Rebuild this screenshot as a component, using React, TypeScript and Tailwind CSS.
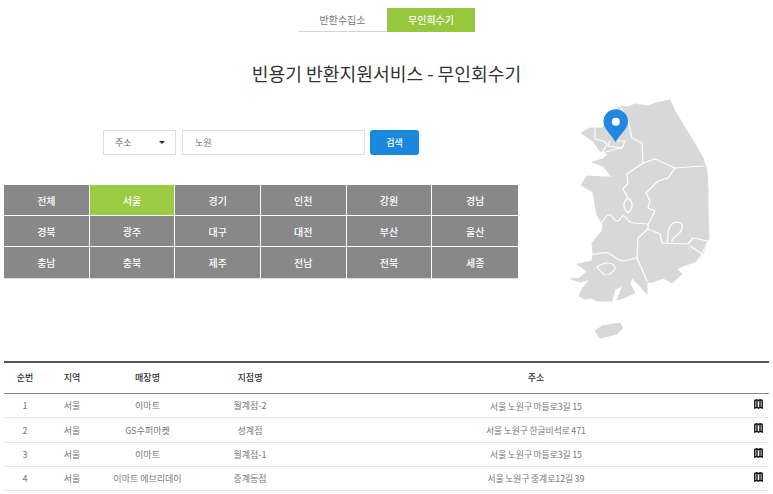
const regions = [
  "전체", "서울", "경기", "인천", "강원", "경남",
  "경북", "광주", "대구", "대전", "부산", "울산",
  "충남", "충북", "제주", "전남", "전북", "세종",
];

const rows = [
  { no: 1, area: "서울", store: "이마트", branch: "월계점-2", addr: "서울 노원구 마들로3길 15" },
  { no: 2, area: "서울", store: "GS수퍼마켓", branch: "성계점", addr: "서울 노원구 한글비석로 471" },
  { no: 3, area: "서울", store: "이마트", branch: "월계점-1", addr: "서울 노원구 마들로3길 15" },
  { no: 4, area: "서울", store: "이마트 에브리데이", branch: "중계동점", addr: "서울 노원구 중계로12길 39" },
];

const cols = "grid grid-cols-[42px_52px_99px_106px_1fr] items-center text-center";

function KoreaMap() {
  return (
    <svg viewBox="565 95 150 250" className="h-[250px] w-[150px]" fill="none">
      <path
        fill="#d8d8d8"
        stroke="#d8d8d8"
        strokeWidth="1"
        strokeLinejoin="round"
        d="M620 105L628 106L635 103L647 105L660 101L670 99L675 110L687 130L695 143L703 157L707 170L708 190L708 210L709 237L703 253L697 260L683 265L677 268L682 273L672 282L663 277L653 281L647 281L647 293L640 285L632 277L630 283L635 292L623 297L617 299L623 285L615 288L612 300L597 300L592 297L585 298L579 295L582 288L590 278L580 281L571 278L580 277L587 270L577 263L583 262L592 260L593 253L592 242L602 230L603 224L597 214L595 203L593 191L581 184L587 175L603 176L612 176L603 165L592 161L603 158L608 153L600 150L593 140L581 132L590 127L603 127L605 122Z"
      />
      <path fill="#d8d8d8" stroke="#d8d8d8" strokeLinejoin="round" d="M595 330L602 325L620 322L623 327L617 333L600 337Z" />
      <g stroke="#ffffff" strokeWidth="1.2" strokeLinejoin="round" strokeLinecap="round">
        <path d="M595 128L595 138L603 140L607 143L602 152" />
        <path d="M610 140L608 145L622 147L625 140L618 140" />
        <path d="M602 152L620 147" />
        <path d="M620 105L628 120L632 137L642 142L643 162L627 173" />
        <path d="M643 162L655 158L675 167L703 165" />
        <path d="M627 173L628 182L623 188L628 197C623 201 622 206 628 212C634 206 633 201 628 197" />
        <path d="M675 167L668 177L658 180L646 192L650 200L648 207L655 210L650 220L648 223L648 228" />
        <path d="M600 223C604 220 606 212 610 214C614 216 614 221 618 220C621 219 621 214 624 215C628 217 628 222 633 222L648 223" />
        <path d="M648 228L638 237L637 257L647 280" />
        <path d="M648 228L660 233L662 242L688 243L693 237L708 240L702 253L690 245" />
        <path d="M667 242C669 235 666 228 672 223C677 219 684 222 682 228C680 234 672 236 672 240" />
        <path d="M702 253L697 260" />
        <path d="M592 253C600 254 603 250 608 252C614 255 618 260 623 260L637 257" />
        <path d="M597 266C601 263 604 262 608 262C612 262 616 265 615 268C613 271 609 274 605 274C602 272 599 269 597 266Z" />
      </g>
      <path
        fill="#2088e0"
        d="M615.5 141C611 133 603.5 128 603.5 120.5A12.2 12.2 0 0 1 628 120.5C628 128 620 133 615.5 141Z"
      />
      <circle cx="615.8" cy="120.8" r="4" fill="#ffffff" />
    </svg>
  );
}

function MapIcon() {
  return (
    <svg viewBox="0 0 9 10" className="h-[10px] w-[9px]" fill="none" stroke="#111111" strokeWidth="1.4">
      <path d="M.8 1.4L3 .8L4.5 1.6L6 .8L8.2 1.4V9L6 8.4L4.5 9.2L3 8.4L.8 9Z" />
      <path d="M3 1V8.4M6 1V8.4" />
    </svg>
  );
}

export default function App() {
  return (
    <div className="h-[494px] w-[773px] overflow-hidden bg-white font-['Noto_Sans_CJK_KR','Noto_Sans',sans-serif]">
      <div className="flex justify-center pt-2 text-[10px] leading-6">
        <div className="h-6 w-[89px] border-b border-[#d5d5d5] text-center text-[#777]">반환수집소</div>
        <div className="h-6 w-[88px] bg-[#96c73d] text-center font-medium text-white">무인회수기</div>
      </div>

      <h1 className="mt-[26px] text-center text-[18.2px] leading-[30px] font-normal text-[#333]">
        빈용기 반환지원서비스 - 무인회수기
      </h1>

      <div className="mt-[9px] flex h-[254px]">
        <div className="ml-1 w-[514px] pt-[33px]">
          <div className="flex h-[25px] pl-[99px] text-[9px]">
            <div className="flex w-[73px] items-center justify-between border border-[#ddd] pr-[10px] pl-[11px] text-[#666]">
              주소
              <span className="h-0 w-0 border-x-[3px] border-t-[3px] border-x-transparent border-t-[#1d2b4f]" />
            </div>
            <div className="ml-[6px] flex w-[183px] items-center border border-[#ddd] pl-3 text-[#777]">노원</div>
            <div className="ml-[5px] flex w-[49px] items-center justify-center rounded-[3px] bg-[#1a88dd] font-medium text-white">
              검색
            </div>
          </div>
          <div className="mt-[30px] grid grid-cols-6 border-b border-[#ddd] text-[10px] font-medium text-white">
            {regions.map((r, i) => (
              <div
                key={r}
                className={`flex h-[31px] items-center justify-center border-white ${i % 6 === 5 ? "" : "border-r"} ${i < 12 ? "border-b" : ""} ${r === "서울" ? "bg-[#9bcb43]" : "bg-[#888888]"}`}
              >
                {r}
              </div>
            ))}
          </div>
        </div>
        <div className="ml-[47px] -mt-[1px]">
          <KoreaMap />
        </div>
      </div>

      <div className="mx-1 mt-[10px] w-[765px] border-t-2 border-[#555] text-[9px]">
        <div className={`${cols} h-[31px] border-b border-[#888] font-medium text-[#333]`}>
          <div>순번</div>
          <div>지역</div>
          <div>매장명</div>
          <div>지점명</div>
          <div>주소</div>
        </div>
        {rows.map((r) => (
          <div key={r.no} className={`${cols} h-[24.3px] border-b border-[#e6e6e6] pt-px text-[#777]`}>
            <div>{r.no}</div>
            <div>{r.area}</div>
            <div>{r.store}</div>
            <div>{r.branch}</div>
            <div className="grid grid-cols-[1fr_auto_1fr] items-center">
              <span />
              <span className="text-[8.8px] [word-spacing:-0.5px]">{r.addr}</span>
              <span className="flex justify-end pr-[6px] pb-[4px]">
                <MapIcon />
              </span>
            </div>
          </div>
        ))}
      </div>
    </div>
  );
}
